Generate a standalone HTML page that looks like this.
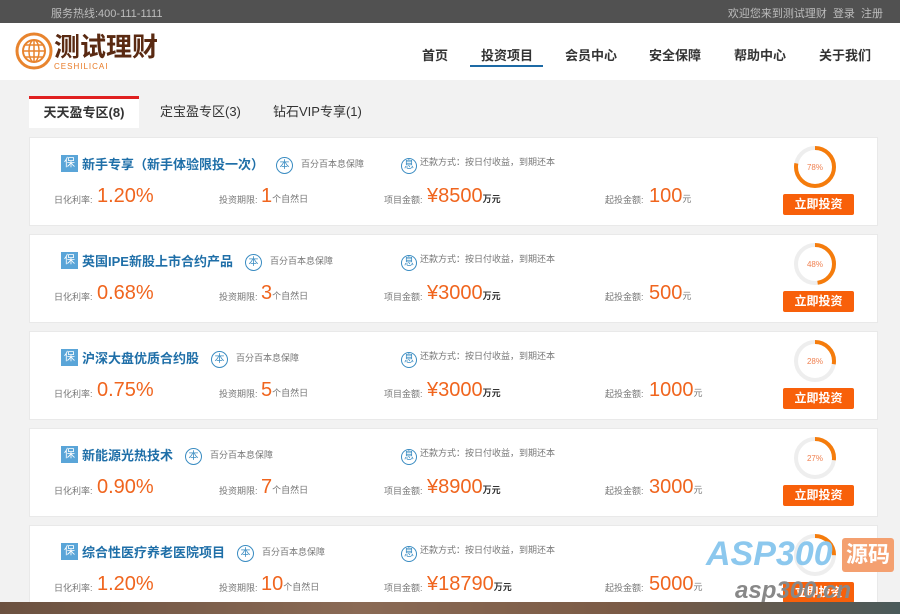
<!DOCTYPE html>
<html><head><meta charset="utf-8"><style>
*{margin:0;padding:0;box-sizing:border-box}
body{width:900px;height:614px;overflow:hidden;background:#f2f2f2;font-family:"Liberation Sans","Noto Sans CJK SC",sans-serif;position:relative}
.top{position:absolute;left:0;top:0;width:900px;height:23px;background:#515151;color:#bdbdbd;font-size:11px}
.top .l{position:absolute;left:51px;top:5px}
.top .r{position:absolute;right:17px;top:5px;word-spacing:3px}
.hdr{position:absolute;left:0;top:23px;width:900px;height:57px;background:#fff}
.logo{position:absolute;left:15px;top:32px}
.brand{position:absolute;left:54px;top:32px;font-size:26px;font-weight:bold;color:#5a2a12;line-height:30px}
.sub{position:absolute;left:54px;top:62px;font-size:8px;color:#e87a25;letter-spacing:1px}
.nav{position:absolute;top:45px;font-size:13px;font-weight:bold;color:#333}
.navline{position:absolute;left:470px;top:65px;width:73px;height:2px;background:#1d6aa5}
.tabs{position:absolute;left:29px;top:96px;width:849px;height:32px}
.tab{position:absolute;top:0;height:32px;font-size:13px;color:#333;line-height:32px;font-weight:bold}
.tab.a{left:0;width:110px;background:#fff;border-top:3px solid #e02020;line-height:28px;text-align:center}
.card{position:absolute;left:29px;width:849px;height:89px;background:#fff;border:1px solid #e9e9e9}
.ic{position:absolute;left:31px;top:17px;width:17px;height:17px;background:#5aa5d8;color:#fff;font-size:11px;text-align:center;line-height:17px}
.tt{position:absolute;left:52px;top:16px;font-size:13px;color:#1f6fa8;font-weight:bold;white-space:nowrap}
.tt .b{display:inline-block;width:17px;height:17px;border:1px solid #3a8cc2;border-radius:50%;font-size:10px;line-height:15px;text-align:center;color:#3a8cc2;font-weight:normal;margin-left:12px;vertical-align:1px}
.tt .bt{font-size:9px;color:#777;font-weight:normal;margin-left:8px;vertical-align:2px}
.x{position:absolute;left:371px;top:17px;font-size:9px;color:#777;white-space:nowrap}
.x .b{display:inline-block;width:16px;height:16px;border:1px solid #3a8cc2;border-radius:50%;font-size:10px;line-height:14px;text-align:center;color:#3a8cc2;margin-right:3px;vertical-align:-3px}
.lb{position:absolute;top:55px;font-size:9px;color:#777}
.v{position:absolute;top:47px;font-size:20px;color:#f0651e;white-space:nowrap}
.v small{font-size:9px;color:#777}
.v b{font-size:9px;color:#333}
.btn{position:absolute;left:753px;top:56px;width:71px;height:21px;background:#f8600a;color:#fff;font-size:12px;font-weight:bold;text-align:center;line-height:21px;border-radius:2px}
svg.c{position:absolute;left:762px;top:6px}
.bot{position:absolute;left:0;top:602px;width:900px;height:12px;background:linear-gradient(90deg,#6b5140,#8a6a55 40%,#7a5a45 70%,#4a5a5a)}
</style></head><body>
<div class="top"><span class="l">服务热线:400-111-1111</span><span class="r">欢迎您来到测试理财 登录 注册</span></div>
<div class="hdr"></div>
<svg class="logo" width="38" height="38" viewBox="0 0 38 38"><circle cx="19" cy="19" r="17" fill="none" stroke="#e8842e" stroke-width="3"/><circle cx="19" cy="19" r="11" fill="none" stroke="#e8842e" stroke-width="2"/><ellipse cx="19" cy="19" rx="5" ry="11" fill="none" stroke="#e8842e" stroke-width="1.5"/><path d="M8 19H30M10 13H28M10 25H28M19 8V30" stroke="#e8842e" stroke-width="1.5"/></svg>
<div class="brand">测试理财</div>
<div class="sub">CESHILICAI</div>
<div class="nav" style="left:422px">首页</div>
<div class="nav" style="left:481px">投资项目</div>
<div class="nav" style="left:565px">会员中心</div>
<div class="nav" style="left:649px">安全保障</div>
<div class="nav" style="left:734px">帮助中心</div>
<div class="nav" style="left:819px">关于我们</div>
<div class="navline"></div>
<div class="tabs"><div class="tab a">天天盈专区(8)</div><div class="tab" style="left:131px;font-weight:normal">定宝盈专区(3)</div><div class="tab" style="left:244px;font-weight:normal">钻石VIP专享(1)</div></div>

<div class="card" style="top:137px"><div class="ic">保</div><div class="tt">新手专享（新手体验限投一次）<span class="b">本</span><span class="bt">百分百本息保障</span></div><div class="x"><span class="b">息</span>还款方式：按日付收益，到期还本</div>
<div class="lb" style="left:24px">日化利率:</div><div class="v" style="left:67px">1.20%</div><div class="lb" style="left:189px">投资期限:</div><div class="v" style="left:231px">1<small>个自然日</small></div><div class="lb" style="left:354px">项目金额:</div><div class="v" style="left:397px">¥8500<b>万元</b></div><div class="lb" style="left:575px">起投金额:</div><div class="v" style="left:619px">100<small>元</small></div>
<svg class="c" width="46" height="46"><circle cx="23" cy="23" r="19" fill="none" stroke="#eee" stroke-width="4"/><circle cx="23" cy="23" r="19" fill="none" stroke="#f57c0c" stroke-width="4" stroke-dasharray="93 120" transform="rotate(-90 23 23)"/><text x="23" y="26" font-size="8" fill="#f08050" text-anchor="middle" font-family="Liberation Sans">78%</text></svg><div class="btn">立即投资</div></div>

<div class="card" style="top:234px"><div class="ic">保</div><div class="tt">英国IPE新股上市合约产品<span class="b">本</span><span class="bt">百分百本息保障</span></div><div class="x"><span class="b">息</span>还款方式：按日付收益，到期还本</div>
<div class="lb" style="left:24px">日化利率:</div><div class="v" style="left:67px">0.68%</div><div class="lb" style="left:189px">投资期限:</div><div class="v" style="left:231px">3<small>个自然日</small></div><div class="lb" style="left:354px">项目金额:</div><div class="v" style="left:397px">¥3000<b>万元</b></div><div class="lb" style="left:575px">起投金额:</div><div class="v" style="left:619px">500<small>元</small></div>
<svg class="c" width="46" height="46"><circle cx="23" cy="23" r="19" fill="none" stroke="#eee" stroke-width="4"/><circle cx="23" cy="23" r="19" fill="none" stroke="#f57c0c" stroke-width="4" stroke-dasharray="57 120" transform="rotate(-90 23 23)"/><text x="23" y="26" font-size="8" fill="#f08050" text-anchor="middle" font-family="Liberation Sans">48%</text></svg><div class="btn">立即投资</div></div>

<div class="card" style="top:331px"><div class="ic">保</div><div class="tt">沪深大盘优质合约股<span class="b">本</span><span class="bt">百分百本息保障</span></div><div class="x"><span class="b">息</span>还款方式：按日付收益，到期还本</div>
<div class="lb" style="left:24px">日化利率:</div><div class="v" style="left:67px">0.75%</div><div class="lb" style="left:189px">投资期限:</div><div class="v" style="left:231px">5<small>个自然日</small></div><div class="lb" style="left:354px">项目金额:</div><div class="v" style="left:397px">¥3000<b>万元</b></div><div class="lb" style="left:575px">起投金额:</div><div class="v" style="left:619px">1000<small>元</small></div>
<svg class="c" width="46" height="46"><circle cx="23" cy="23" r="19" fill="none" stroke="#eee" stroke-width="4"/><circle cx="23" cy="23" r="19" fill="none" stroke="#f57c0c" stroke-width="4" stroke-dasharray="33 120" transform="rotate(-90 23 23)"/><text x="23" y="26" font-size="8" fill="#f08050" text-anchor="middle" font-family="Liberation Sans">28%</text></svg><div class="btn">立即投资</div></div>

<div class="card" style="top:428px"><div class="ic">保</div><div class="tt">新能源光热技术<span class="b">本</span><span class="bt">百分百本息保障</span></div><div class="x"><span class="b">息</span>还款方式：按日付收益，到期还本</div>
<div class="lb" style="left:24px">日化利率:</div><div class="v" style="left:67px">0.90%</div><div class="lb" style="left:189px">投资期限:</div><div class="v" style="left:231px">7<small>个自然日</small></div><div class="lb" style="left:354px">项目金额:</div><div class="v" style="left:397px">¥8900<b>万元</b></div><div class="lb" style="left:575px">起投金额:</div><div class="v" style="left:619px">3000<small>元</small></div>
<svg class="c" width="46" height="46"><circle cx="23" cy="23" r="19" fill="none" stroke="#eee" stroke-width="4"/><circle cx="23" cy="23" r="19" fill="none" stroke="#f57c0c" stroke-width="4" stroke-dasharray="32 120" transform="rotate(-90 23 23)"/><text x="23" y="26" font-size="8" fill="#f08050" text-anchor="middle" font-family="Liberation Sans">27%</text></svg><div class="btn">立即投资</div></div>

<div class="card" style="top:525px"><div class="ic">保</div><div class="tt">综合性医疗养老医院项目<span class="b">本</span><span class="bt">百分百本息保障</span></div><div class="x"><span class="b">息</span>还款方式：按日付收益，到期还本</div>
<div class="lb" style="left:24px">日化利率:</div><div class="v" style="left:67px">1.20%</div><div class="lb" style="left:189px">投资期限:</div><div class="v" style="left:231px">10<small>个自然日</small></div><div class="lb" style="left:354px">项目金额:</div><div class="v" style="left:397px">¥18790<b>万元</b></div><div class="lb" style="left:575px">起投金额:</div><div class="v" style="left:619px">5000<small>元</small></div>
<svg class="c" width="46" height="46"><circle cx="23" cy="23" r="19" fill="none" stroke="#eee" stroke-width="4"/><circle cx="23" cy="23" r="19" fill="none" stroke="#f57c0c" stroke-width="4" stroke-dasharray="30 120" transform="rotate(-90 23 23)"/></svg><div class="btn">立即投资</div></div>

<div style="position:absolute;left:706px;top:535px;font-size:34px;font-weight:bold;font-style:italic;color:#8cc8ee;font-family:'Liberation Sans',sans-serif">ASP300</div>
<div style="position:absolute;left:842px;top:538px;width:52px;height:34px;background:#f4a070;color:#fff;font-size:22px;font-weight:bold;text-align:center;line-height:34px;border-radius:3px">源码</div>
<div style="position:absolute;left:735px;top:577px;font-size:24px;font-weight:bold;font-style:italic;color:#888">asp300.cn</div>
<div class="bot"></div>
</body></html>
